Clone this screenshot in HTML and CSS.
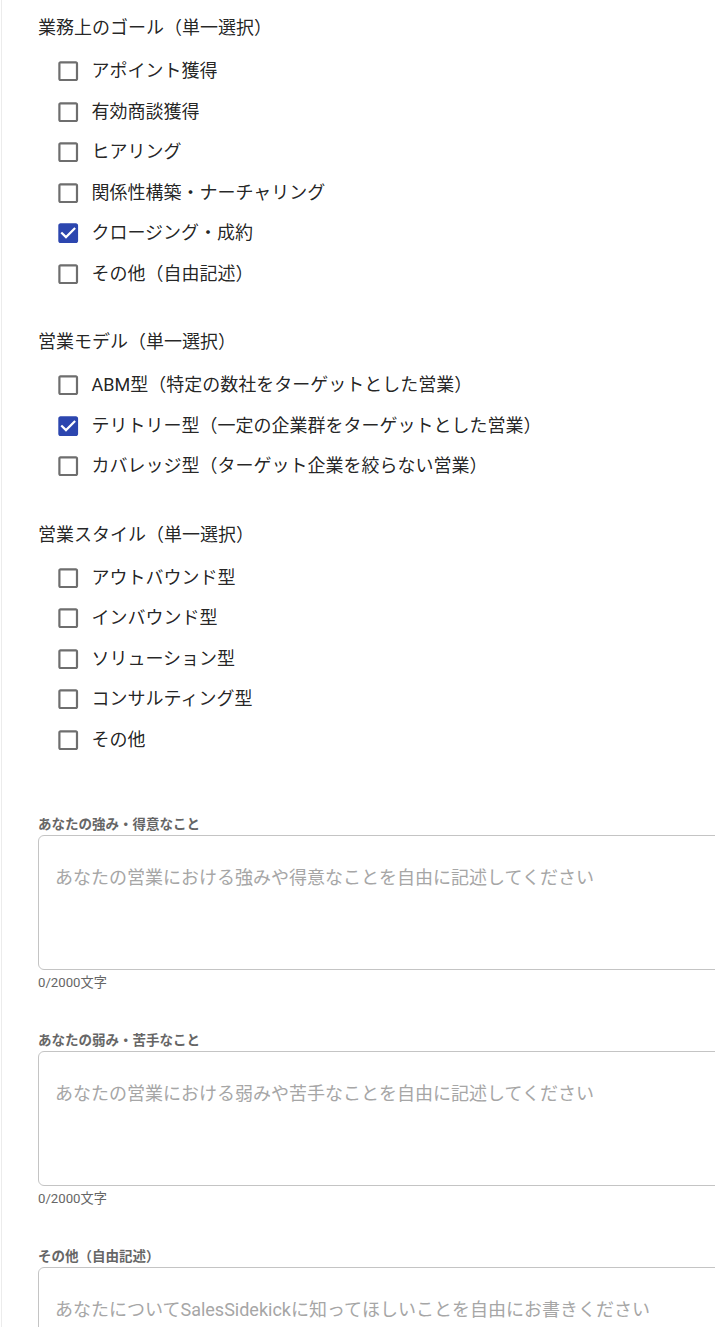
FILE: index.html
```html
<!DOCTYPE html>
<html lang="ja">
<head>
<meta charset="utf-8">
<link rel="stylesheet" href="styles.css">
</head>
<body>
<div class="page">
  <section class="group">
    <h2 class="group-title">業務上のゴール（単一選択）</h2>
    <ul class="options">
      <li class="option"><svg class="cb" viewBox="0 0 24 24"><path d="M19 5v14H5V5h14m0-2H5c-1.1 0-2 .9-2 2v14c0 1.1.9 2 2 2h14c1.1 0 2-.9 2-2V5c0-1.1-.9-2-2-2z"/></svg><span>アポイント獲得</span></li>
      <li class="option"><svg class="cb" viewBox="0 0 24 24"><path d="M19 5v14H5V5h14m0-2H5c-1.1 0-2 .9-2 2v14c0 1.1.9 2 2 2h14c1.1 0 2-.9 2-2V5c0-1.1-.9-2-2-2z"/></svg><span>有効商談獲得</span></li>
      <li class="option"><svg class="cb" viewBox="0 0 24 24"><path d="M19 5v14H5V5h14m0-2H5c-1.1 0-2 .9-2 2v14c0 1.1.9 2 2 2h14c1.1 0 2-.9 2-2V5c0-1.1-.9-2-2-2z"/></svg><span>ヒアリング</span></li>
      <li class="option"><svg class="cb" viewBox="0 0 24 24"><path d="M19 5v14H5V5h14m0-2H5c-1.1 0-2 .9-2 2v14c0 1.1.9 2 2 2h14c1.1 0 2-.9 2-2V5c0-1.1-.9-2-2-2z"/></svg><span>関係性構築・ナーチャリング</span></li>
      <li class="option"><svg class="cb checked" viewBox="0 0 24 24"><path d="M19 3H5c-1.11 0-2 .9-2 2v14c0 1.1.89 2 2 2h14c1.11 0 2-.9 2-2V5c0-1.1-.89-2-2-2zm-9 14l-5-5 1.41-1.410L10 14.17l7.59-7.59L19 8l-9 9z"/></svg><span>クロージング・成約</span></li>
      <li class="option"><svg class="cb" viewBox="0 0 24 24"><path d="M19 5v14H5V5h14m0-2H5c-1.1 0-2 .9-2 2v14c0 1.1.9 2 2 2h14c1.1 0 2-.9 2-2V5c0-1.1-.9-2-2-2z"/></svg><span>その他（自由記述）</span></li>
    </ul>
  </section>

  <section class="group">
    <h2 class="group-title">営業モデル（単一選択）</h2>
    <ul class="options">
      <li class="option"><svg class="cb" viewBox="0 0 24 24"><path d="M19 5v14H5V5h14m0-2H5c-1.1 0-2 .9-2 2v14c0 1.1.9 2 2 2h14c1.1 0 2-.9 2-2V5c0-1.1-.9-2-2-2z"/></svg><span>ABM型（特定の数社をターゲットとした営業）</span></li>
      <li class="option"><svg class="cb checked" viewBox="0 0 24 24"><path d="M19 3H5c-1.11 0-2 .9-2 2v14c0 1.1.89 2 2 2h14c1.11 0 2-.9 2-2V5c0-1.1-.89-2-2-2zm-9 14l-5-5 1.41-1.41L10 14.17l7.59-7.59L19 8l-9 9z"/></svg><span>テリトリー型（一定の企業群をターゲットとした営業）</span></li>
      <li class="option"><svg class="cb" viewBox="0 0 24 24"><path d="M19 5v14H5V5h14m0-2H5c-1.1 0-2 .9-2 2v14c0 1.1.9 2 2 2h14c1.1 0 2-.9 2-2V5c0-1.1-.9-2-2-2z"/></svg><span>カバレッジ型（ターゲット企業を絞らない営業）</span></li>
    </ul>
  </section>

  <section class="group">
    <h2 class="group-title">営業スタイル（単一選択）</h2>
    <ul class="options">
      <li class="option"><svg class="cb" viewBox="0 0 24 24"><path d="M19 5v14H5V5h14m0-2H5c-1.1 0-2 .9-2 2v14c0 1.1.9 2 2 2h14c1.1 0 2-.9 2-2V5c0-1.1-.9-2-2-2z"/></svg><span>アウトバウンド型</span></li>
      <li class="option"><svg class="cb" viewBox="0 0 24 24"><path d="M19 5v14H5V5h14m0-2H5c-1.1 0-2 .9-2 2v14c0 1.1.9 2 2 2h14c1.1 0 2-.9 2-2V5c0-1.1-.9-2-2-2z"/></svg><span>インバウンド型</span></li>
      <li class="option"><svg class="cb" viewBox="0 0 24 24"><path d="M19 5v14H5V5h14m0-2H5c-1.1 0-2 .9-2 2v14c0 1.1.9 2 2 2h14c1.1 0 2-.9 2-2V5c0-1.1-.9-2-2-2z"/></svg><span>ソリューション型</span></li>
      <li class="option"><svg class="cb" viewBox="0 0 24 24"><path d="M19 5v14H5V5h14m0-2H5c-1.1 0-2 .9-2 2v14c0 1.1.9 2 2 2h14c1.1 0 2-.9 2-2V5c0-1.1-.9-2-2-2z"/></svg><span>コンサルティング型</span></li>
      <li class="option"><svg class="cb" viewBox="0 0 24 24"><path d="M19 5v14H5V5h14m0-2H5c-1.1 0-2 .9-2 2v14c0 1.1.9 2 2 2h14c1.1 0 2-.9 2-2V5c0-1.1-.9-2-2-2z"/></svg><span>その他</span></li>
    </ul>
  </section>

  <div class="field first">
    <label class="field-label">あなたの強み・得意なこと</label>
    <textarea class="field-input" placeholder="あなたの営業における強みや得意なことを自由に記述してください"></textarea>
    <div class="counter">0/2000文字</div>
  </div>

  <div class="field">
    <label class="field-label">あなたの弱み・苦手なこと</label>
    <textarea class="field-input" placeholder="あなたの営業における弱みや苦手なことを自由に記述してください"></textarea>
    <div class="counter">0/2000文字</div>
  </div>

  <div class="field">
    <label class="field-label">その他（自由記述）</label>
    <textarea class="field-input" placeholder="あなたについてSalesSidekickに知ってほしいことを自由にお書きください"></textarea>
  </div>
</div>
</body>
</html>
```

FILE: styles.css
```css
html, body {
  margin: 0;
  padding: 0;
  background: #fff;
  overflow: hidden;
}

body {
  font-family: Roboto, "Noto Sans CJK JP", sans-serif;
  color: rgba(0, 0, 0, 0.87);
}

.page {
  margin-left: 1px;
  border-left: 1px solid #ececec;
  padding: 15px 0 0 36px;
  min-height: 1400px;
}

.group {
  margin-bottom: 35px;
}

.group-title {
  margin: 0 0 10px;
  font-size: 18px;
  font-weight: 400;
  line-height: 26px;
}

.options {
  list-style: none;
  margin: 0;
  padding: 0;
}

.option {
  display: flex;
  align-items: center;
  height: 40.5px;
  font-size: 18px;
  line-height: 24px;
  white-space: nowrap;
}

.cb {
  width: 26.4px;
  height: 26.4px;
  margin-left: 16.7px;
  margin-right: 10.4px;
  fill: #6e6e6e;
  flex: none;
}

.cb.checked {
  fill: #2c46af;
}

.field {
  margin-top: 39px;
}

.field.first {
  margin-top: 55px;
}

.field-label {
  display: block;
  font-size: 13.5px;
  font-weight: 700;
  line-height: 18px;
  color: #666;
  margin-bottom: 2px;
}

.field-input {
  display: block;
  box-sizing: border-box;
  width: 720px;
  height: 135px;
  margin: 0;
  padding: 29px 16px 10px;
  border: 1px solid #c4c4c4;
  border-radius: 6px;
  font-family: Roboto, "Noto Sans CJK JP", sans-serif;
  font-size: 18px;
  line-height: 26px;
  color: rgba(0, 0, 0, 0.87);
  resize: none;
  outline: none;
  background: #fff;
}

.field-input::placeholder {
  color: #a6a6a6;
  opacity: 1;
}

.counter {
  margin-top: 4px;
  font-size: 13.2px;
  line-height: 18px;
  color: #666;
}
```
